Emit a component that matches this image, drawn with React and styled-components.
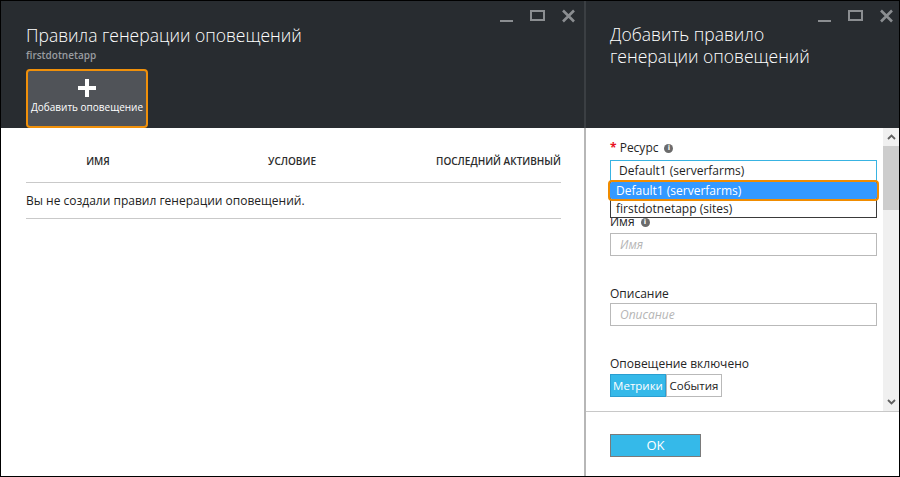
import React from "react";
import styled, { createGlobalStyle } from "styled-components";

const Global = createGlobalStyle`
  html, body { margin: 0; padding: 0; background: #fff; }
  body { font-family: "Segoe UI", "Open Sans", "Noto Sans", sans-serif; }
  * { box-sizing: border-box; }
`;

const Frame = styled.div`
  width: 900px;
  height: 477px;
  border: 1px solid #000;
  display: flex;
  background: #fff;
  overflow: hidden;
`;

const Panel = styled.div`
  display: flex;
  flex-direction: column;
  width: ${(p) => p.$width}px;
  flex: none;
  position: relative;
`;

const Header = styled.div`
  height: 127px;
  flex: none;
  background: #282c30;
  position: relative;
  padding: ${(p) => p.$pad};
  border-right: ${(p) => (p.$divider ? "2px solid #3b3f43" : "none")};
`;

const Body = styled.div`
  flex: 1;
  border-right: ${(p) => (p.$divider ? "2px solid #b7b7b7" : "none")};
  display: flex;
  flex-direction: column;
  min-height: 0;
`;

const Title = styled.h1`
  margin: 0;
  font-weight: 300;
  font-size: 17.5px;
  line-height: 22px;
  color: #fff;
`;

const Subtitle = styled.div`
  font-size: 10px;
  font-weight: 600;
  color: #9a9da0;
  line-height: 12px;
  margin-top: 3px;
`;

const Controls = styled.div`
  position: absolute;
  top: 8px;
  right: ${(p) => p.$right}px;
  display: flex;
  align-items: center;
  gap: 17px;
`;

const ActionButton = styled.button`
  margin-top: 8px;
  width: 122px;
  height: 59px;
  border: 2px solid #f0900a;
  border-radius: 4px;
  background: #505358;
  color: #fff;
  display: flex;
  flex-direction: column;
  align-items: center;
  padding: 7px 0 0;
  font-family: inherit;
  cursor: pointer;
`;

const ButtonLabel = styled.span`
  font-size: 10px;
  line-height: 12px;
  margin-top: 3px;
  white-space: nowrap;
`;

const TableWrap = styled.div`
  padding: 0 23px 0 25px;
`;

const Row = styled.div`
  display: grid;
  grid-template-columns: 144px 244px 1fr;
  align-items: end;
  height: ${(p) => p.$h}px;
  border-bottom: 1px solid #c9c9c9;
  padding-bottom: ${(p) => p.$pb}px;
`;

const Th = styled.div`
  font-size: 10px;
  font-weight: 600;
  color: #2b2b2b;
  text-transform: uppercase;
  text-align: ${(p) => p.$align || "center"};
  white-space: nowrap;
`;

const EmptyCell = styled.div`
  grid-column: 1 / -1;
  font-size: 12px;
  color: #222;
`;

const FormArea = styled.div`
  flex: 1;
  display: flex;
  min-height: 0;
  border-bottom: 1px solid #c8c8c8;
`;

const Form = styled.div`
  flex: 1;
  padding: 11px 6px 0 24px;
  display: flex;
  flex-direction: column;
`;

const Field = styled.div`
  display: flex;
  flex-direction: column;
  gap: ${(p) => p.$gap ?? 0}px;
  margin-bottom: ${(p) => p.$mb ?? 29}px;
  position: relative;
`;

const Label = styled.label`
  font-size: 12px;
  line-height: 18px;
  color: #252525;
  display: flex;
  align-items: center;
  gap: 6px;
`;

const Star = styled.span`
  color: #e81123;
  font-weight: 700;
`;

const Info = styled.span`
  width: 9px;
  height: 9px;
  border-radius: 50%;
  background: #6b6b6b;
  color: #fff;
  font-size: 7px;
  font-weight: 700;
  line-height: 9px;
  text-align: center;
  font-family: "DejaVu Sans", sans-serif;
`;

const Select = styled.div`
  height: 21px;
  border: 1px solid #38b3e2;
  font-size: 12px;
  line-height: 19px;
  padding-left: 8px;
  color: #1e1e1e;
`;

const Input = styled.div`
  height: 23px;
  border: 1px solid #b9b9b9;
  font-size: 12px;
  font-style: italic;
  line-height: 21px;
  padding-left: 9px;
  color: #b5b5b5;
`;

const Dropdown = styled.div`
  position: absolute;
  left: 0;
  right: 0;
  top: 42px;
  background: #fff;
  border: 1px solid #3a3a3a;
  border-top: none;
  z-index: 2;
`;

const Option = styled.div`
  font-size: 12px;
  line-height: ${(p) => (p.$selected ? 17 : 16)}px;
  padding-left: ${(p) => (p.$selected ? 6 : 5)}px;
  color: ${(p) => (p.$selected ? "#fff" : "#1e1e1e")};
  background: ${(p) => (p.$selected ? "#3399ff" : "#fff")};
  outline: ${(p) => (p.$selected ? "2px solid #f08c00" : "none")};
  border-radius: ${(p) => (p.$selected ? "2px" : "0")};
  margin: ${(p) => (p.$selected ? "1px -1px 2px" : "0")};
  position: relative;
`;

const Segmented = styled.div`
  display: flex;
`;

const Segment = styled.div`
  height: 23px;
  width: 56px;
  text-align: center;
  font-size: 11.5px;
  line-height: 21px;
  white-space: nowrap;
  border: 1px solid ${(p) => (p.$active ? "#2b9ed0" : "#b9b9b9")};
  background: ${(p) => (p.$active ? "#35b9e9" : "#fff")};
  color: ${(p) => (p.$active ? "#fff" : "#222")};
`;

const Scrollbar = styled.div`
  width: 16px;
  flex: none;
  background: #f0f0f0;
  display: flex;
  flex-direction: column;
`;

const Arrow = styled.div`
  height: 18px;
  display: flex;
  align-items: center;
  justify-content: center;
  background: #f0f0f0;
`;

const Thumb = styled.div`
  height: 64px;
  background: #cdcdcd;
`;

const Track = styled.div`
  flex: 1;
`;

const Footer = styled.div`
  height: 64px;
  flex: none;
  padding: 21px 0 0 24px;
`;

const OkButton = styled.button`
  width: 91px;
  height: 23px;
  background: #35b9e9;
  border: 1px solid #7a7a7a;
  color: #fff;
  font-family: inherit;
  font-size: 13px;
  padding: 0;
`;

const Min = () => (
  <svg width="13" height="14" viewBox="0 0 13 14">
    <rect x="0" y="11" width="13" height="2" fill="#8b8e91" />
  </svg>
);
const Max = () => (
  <svg width="15" height="14" viewBox="0 0 15 14">
    <rect x="1" y="2" width="13" height="9" fill="none" stroke="#8b8e91" strokeWidth="2" />
  </svg>
);
const Close = () => (
  <svg width="13" height="14" viewBox="0 0 13 14">
    <path d="M1 1.5 L12 12.5 M12 1.5 L1 12.5" stroke="#8b8e91" strokeWidth="2.6" />
  </svg>
);

const WindowControls = ({ right }) => (
  <Controls $right={right}>
    <Min />
    <Max />
    <Close />
  </Controls>
);

const Chevron = ({ up }) => (
  <svg width="9" height="6" viewBox="0 0 9 6">
    <path
      d={up ? "M1 5 L4.5 1.5 L8 5" : "M1 1 L4.5 4.5 L8 1"}
      fill="none"
      stroke="#606060"
      strokeWidth="1.8"
    />
  </svg>
);

export default function App() {
  return (
    <>
      <Global />
      <Frame>
        <Panel $width={585}>
          <Header $divider $pad="23px 0 0 25px">
            <Title>Правила генерации оповещений</Title>
            <Subtitle>firstdotnetapp</Subtitle>
            <ActionButton>
              <svg width="20" height="20" viewBox="0 0 20 20">
                <path d="M10 1 V19 M1 10 H19" stroke="#fff" strokeWidth="4" />
              </svg>
              <ButtonLabel>Добавить оповещение</ButtonLabel>
            </ActionButton>
            <WindowControls right={9} />
          </Header>
          <Body $divider>
            <TableWrap>
              <Row $h={55} $pb={14}>
                <Th>Имя</Th>
                <Th>Условие</Th>
                <Th $align="right">Последний активный</Th>
              </Row>
              <Row $h={36} $pb={9}>
                <EmptyCell>Вы не создали правил генерации оповещений.</EmptyCell>
              </Row>
            </TableWrap>
          </Body>
        </Panel>
        <Panel $width={313}>
          <Header $pad="22px 0 0 24px">
            <Title>
              Добавить правило
              <br />
              генерации оповещений
            </Title>
            <WindowControls right={6} />
          </Header>
          <Body>
            <FormArea>
              <Form>
                <Field $gap={3} $mb={32}>
                  <Label>
                    <span>
                      <Star>*</Star> Ресурс
                    </span>
                    <Info>i</Info>
                  </Label>
                  <Select>Default1 (serverfarms)</Select>
                  <Dropdown>
                    <Option $selected>Default1 (serverfarms)</Option>
                    <Option>firstdotnetapp (sites)</Option>
                  </Dropdown>
                </Field>
                <Field $gap={2}>
                  <Label>
                    Имя <Info>i</Info>
                  </Label>
                  <Input>Имя</Input>
                </Field>
                <Field>
                  <Label>Описание</Label>
                  <Input>Описание</Input>
                </Field>
                <Field $gap={1}>
                  <Label>Оповещение включено</Label>
                  <Segmented>
                    <Segment $active>Метрики</Segment>
                    <Segment>События</Segment>
                  </Segmented>
                </Field>
              </Form>
              <Scrollbar>
                <Arrow>
                  <Chevron up />
                </Arrow>
                <Thumb />
                <Track />
                <Arrow>
                  <Chevron />
                </Arrow>
              </Scrollbar>
            </FormArea>
            <Footer>
              <OkButton>OK</OkButton>
            </Footer>
          </Body>
        </Panel>
      </Frame>
    </>
  );
}
